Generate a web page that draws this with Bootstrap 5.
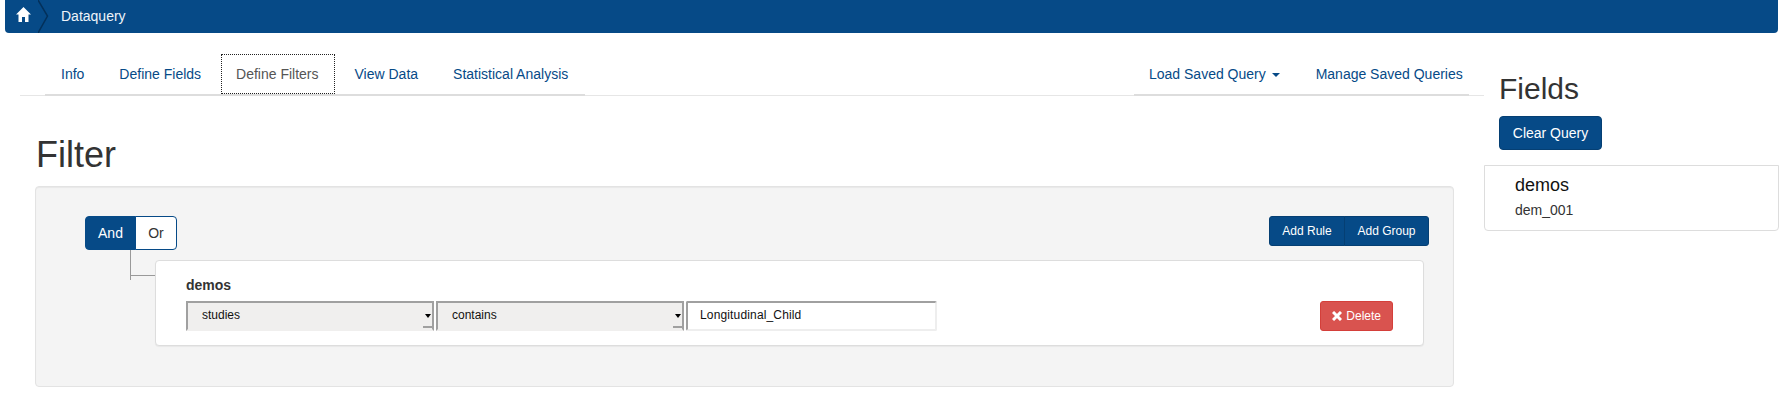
<!DOCTYPE html>
<html lang="en">
<head>
    <meta charset="UTF-8">
    <title>Dataquery</title>
    <link href="https://cdn.jsdelivr.net/npm/bootstrap@5.3.2/dist/css/bootstrap.min.css" rel="stylesheet">
    <style>
        body {
            font-family: "Liberation Sans", Arial, sans-serif;
            font-size: 14px;
            color: #333;
            line-height: 20px;
        }
        a { text-decoration: none; color: #064a87; }

        .dq-top {
            height: 33px;
            margin-left: 5px;
            margin-right: 2px;
            background: #064a87;
            border-radius: 0 0 4px 4px;
            color: #eef4fa;
        }
        .dq-home { width: 33px; padding-left: 11px; margin-bottom: 4px; }
        .dq-chevron { width: 14px; height: 33px; }
        .dq-crumb { margin-left: 9px; margin-bottom: 2px; }

        .dq-main { width: 1484px; padding-left: 20px; }
        .dq-side { width: 296px; }

        .dq-tabbar {
            height: 42px;
            margin-top: 21px;
            border-bottom: 1px solid #e6e6e6;
        }
        .dq-tabs {
            list-style: none;
            margin: 0;
            padding: 0;
            height: 42px;
            border-bottom: 2px solid #ddd;
        }
        .dq-tabs-left { margin-left: 25px; padding: 0 2px 0 1px; gap: 5px; }
        .dq-tabs-right { margin-right: 15px; width: 335px; gap: 6px; }
        .dq-tabs a {
            display: block;
            height: 40px;
            padding: 10px 15px;
            white-space: nowrap;
        }
        .dq-tabs a.dq-current {
            color: #555;
            padding: 9px 15px 9px 14px;
            border: 1px dotted #222;
        }
        .dq-caret {
            display: inline-block;
            margin-left: 2px;
            vertical-align: middle;
            border-top: 4px solid #064a87;
            border-left: 4px solid transparent;
            border-right: 4px solid transparent;
        }

        .dq-title {
            font-size: 36px;
            line-height: 40px;
            font-weight: 500;
            margin: 39px 0 11px 16px;
        }
        .dq-well {
            margin-left: 15px;
            margin-right: 30px;
            height: 201px;
            background: #f4f4f4;
            border: 1px solid #e3e3e3;
            border-radius: 4px;
            box-shadow: inset 0 1px 1px rgba(0,0,0,.05);
            padding: 29px 24px 0 49px;
        }
        .dq-logic .btn {
            width: 51px;
            height: 34px;
            padding: 6px 0;
            font-size: 14px;
            line-height: 20px;
            border-radius: 4px;
            border: 1px solid #064a87;
            background: #fff;
            color: #333;
        }
        .dq-logic .btn.dq-on { background: #064a87; color: #fff; }
        .dq-logic .btn + .btn { width: 42px; }
        .dq-add .btn {
            height: 30px;
            padding: 1px 0 0;
            font-size: 12px;
            line-height: 27px;
            background: #064a87;
            border: 1px solid #053f73;
            color: #fff;
            border-radius: 3px;
        }
        .dq-add .btn:first-child { width: 76px; }
        .dq-add .btn:last-child { width: 85px; }

        .dq-branch { width: 70px; flex: none; }
        .dq-link-v {
            width: 25px;
            height: 26px;
            margin-left: 45px;
            border-left: 1px solid #999;
            border-bottom: 1px solid #999;
        }
        .dq-link-stub { width: 1px; height: 4px; margin-left: 45px; background: #999; }

        .dq-rule {
            flex: 1;
            height: 86px;
            margin-top: 10px;
            margin-right: 5px;
            background: #fff;
            border: 1px solid #ddd;
            border-radius: 4px;
            box-shadow: 0 1px 1px rgba(0,0,0,.05);
            padding: 12px 30px 0;
            font-size: 12px;
        }
        .dq-rule-name { font-size: 14px; font-weight: 700; line-height: 20px; margin-top: 2px; margin-bottom: 6px; }
        .dq-row { gap: 2px; }
        .dq-select-box { position: relative; display: block; }
        .dq-select-box::after {
            content: "";
            position: absolute;
            right: 3px;
            top: 13px;
            border-top: 4px solid #000;
            border-left: 3px solid transparent;
            border-right: 3px solid transparent;
        }
        .dq-select {
            display: block;
            width: 248px;
            height: 30px;
            padding: 0 0 2px 14px;
            font-size: 12px;
            color: #111;
            appearance: none;
            background: #f0efee linear-gradient(#a0a0a0, #a0a0a0) no-repeat right 2px / 9px 2px;
            background-position: right bottom 1px;
            border-width: 2px;
            border-style: solid;
            border-color: #a0a0a0 #a0a0a0 #f0efee #a0a0a0;
        }
        .dq-input {
            width: 251px;
            height: 30px;
            padding: 0 0 2px 12px;
            font-size: 12px;
            letter-spacing: .15px;
            color: #111;
            background: #fff;
            border-width: 2px;
            border-style: solid;
            border-color: #a0a0a0 #eee #eee #a0a0a0;
            border-radius: 2px;
            outline: 0;
        }
        .dq-del {
            width: 73px;
            height: 30px;
            padding: 0;
            font-size: 12px;
            line-height: 28px;
            color: #fff;
            background: #d9534f;
            border: 1px solid #d43f3a;
            border-radius: 3px;
        }
        .dq-del svg { vertical-align: -1px; margin-right: 1px; }

        .dq-side-title {
            font-size: 30px;
            line-height: 33px;
            font-weight: 500;
            margin: 39px 0 0 15px;
        }
        .dq-clear {
            display: block;
            margin: 11px 0 15px 15px;
            width: 103px;
            height: 34px;
            padding: 0;
            font-size: 14px;
            line-height: 32px;
            background: #064a87;
            border: 1px solid #053f73;
            color: #fff;
            border-radius: 4px;
        }
        .dq-panel {
            height: 66px;
            margin-right: 1px;
            padding: 9px 30px 0;
            background: #fff;
            border: 1px solid #ddd;
            border-radius: 0 0 4px 4px;
        }
        .dq-panel-name { font-size: 18px; line-height: 20px; color: #111; margin-bottom: 5px; }
    </style>
</head>
<body>
    <nav class="dq-top d-flex align-items-center">
        <a class="dq-home d-block" href="#">
            <svg width="15" height="15" viewBox="0 0 15 15" class="d-block"><path fill="#fff" d="M7.500 0 0 7.500h2.500V15h3.500v-5h3v5h3.500V7.500H15z"/></svg>
        </a>
        <svg class="dq-chevron" viewBox="0 0 14 33"><path fill="none" stroke="#03305a" stroke-width="1.500" d="M0 0 9.500 16 0 33"/></svg>
        <span class="dq-crumb">Dataquery</span>
    </nav>

    <div class="d-flex">
        <div class="dq-main flex-shrink-0">
            <div class="dq-tabbar d-flex justify-content-between">
                <ul class="dq-tabs dq-tabs-left d-flex">
                    <li><a href="#">Info</a></li>
                    <li><a href="#">Define Fields</a></li>
                    <li><a class="dq-current" href="#">Define Filters</a></li>
                    <li><a href="#">View Data</a></li>
                    <li><a href="#">Statistical Analysis</a></li>
                </ul>
                <ul class="dq-tabs dq-tabs-right d-flex">
                    <li><a href="#">Load Saved Query <span class="dq-caret"></span></a></li>
                    <li><a href="#">Manage Saved Queries</a></li>
                </ul>
            </div>

            <h1 class="dq-title">Filter</h1>

            <div class="dq-well">
                <div class="d-flex justify-content-between align-items-start">
                    <div class="dq-logic btn-group">
                        <button class="btn dq-on" type="button">And</button>
                        <button class="btn" type="button">Or</button>
                    </div>
                    <div class="dq-add btn-group">
                        <button class="btn" type="button">Add Rule</button>
                        <button class="btn" type="button">Add Group</button>
                    </div>
                </div>
                <div class="d-flex">
                    <div class="dq-branch">
                        <div class="dq-link-v"></div>
                        <div class="dq-link-stub"></div>
                    </div>
                    <div class="dq-rule">
                        <div class="dq-rule-name">demos</div>
                        <div class="d-flex justify-content-between">
                            <div class="dq-row d-flex">
                                <span class="dq-select-box"><select class="dq-select"><option>studies</option></select></span>
                                <span class="dq-select-box"><select class="dq-select"><option>contains</option></select></span>
                                <input class="dq-input" type="text" value="Longitudinal_Child">
                            </div>
                            <button class="btn dq-del" type="button"><svg width="10" height="10" viewBox="0 0 10 10"><path stroke="#fff" stroke-width="3" d="M1 1l8 8M9 1l-8 8"/></svg> Delete</button>
                        </div>
                    </div>
                </div>
            </div>
        </div>

        <aside class="dq-side flex-shrink-0">
            <h2 class="dq-side-title">Fields</h2>
            <button class="btn dq-clear" type="button">Clear Query</button>
            <div class="dq-panel">
                <div class="dq-panel-name">demos</div>
                <div>dem_001</div>
            </div>
        </aside>
    </div>
</body>
</html>
